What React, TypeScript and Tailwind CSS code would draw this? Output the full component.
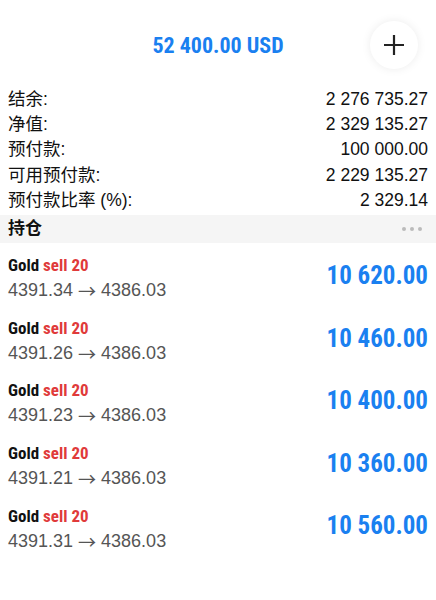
import React from "react";

const cond = { fontFamily: '"Liberation Sans Narrow", "Roboto Condensed", sans-serif' };

const summary = [
  ["结余:", "2 276 735.27"],
  ["净值:", "2 329 135.27"],
  ["预付款:", "100 000.00"],
  ["可用预付款:", "2 229 135.27"],
  ["预付款比率 (%):", "2 329.14"],
];

const positions = [
  ["4391.34", "10 620.00"],
  ["4391.26", "10 460.00"],
  ["4391.23", "10 400.00"],
  ["4391.21", "10 360.00"],
  ["4391.31", "10 560.00"],
];

export default function App() {
  return (
    <div
      className="w-[436px] h-[600px] bg-white overflow-hidden"
      style={{ fontFamily: '"Liberation Sans", "Noto Sans CJK SC", sans-serif' }}
    >
      <div className="relative h-[86px] flex items-center justify-center">
        <span className="text-[22px] font-bold text-[#1a80f0] mt-[4px]" style={cond}>
          52 400.00 USD
        </span>
        <div className="absolute right-[18px] top-[21px] w-[48px] h-[48px] rounded-full bg-white shadow-[0_0_10px_rgba(0,0,0,0.08)] flex items-center justify-center">
          <svg width="22" height="22" viewBox="0 0 22 22">
            <path d="M11 1v20M1 11h20" stroke="#222" strokeWidth="2.2" />
          </svg>
        </div>
      </div>
      <div className="px-2 flex flex-col">
        {summary.map(([l, v]) => (
          <div key={l} className="flex justify-between items-center h-[25.4px] text-[17.5px] text-[#111]">
            <span>{l}</span>
            <span>{v}</span>
          </div>
        ))}
      </div>
      <div className="mt-[2px] h-[28px] bg-[#f5f5f5] flex items-center justify-between px-2">
        <span className="text-[17px] font-bold text-[#111]">持仓</span>
        <div className="flex gap-[4px] mr-[6px]">
          <span className="w-[4px] h-[4px] rounded-full bg-[#bbb]" />
          <span className="w-[4px] h-[4px] rounded-full bg-[#bbb]" />
          <span className="w-[4px] h-[4px] rounded-full bg-[#bbb]" />
        </div>
      </div>
      <div className="flex flex-col pt-[4px]">
        {positions.map(([p, v], i) => (
          <div key={i} className="h-[62.6px] flex items-center justify-between px-2">
            <div className="flex flex-col">
              <div className="text-[17px] font-bold leading-[24px]" style={cond}>
                <span className="text-[#111]">Gold</span>{" "}
                <span className="text-[#e03a3a]">sell 20</span>
              </div>
              <div className="text-[18px] text-[#555] leading-[26px] flex items-center gap-[5px]">
                <span>{p}</span>
                <span style={{ fontFamily: '"Noto Sans CJK SC", sans-serif' }} className="text-[18px] leading-[26px]">→</span>
                <span>4386.03</span>
              </div>
            </div>
            <span className="text-[25px] font-bold text-[#1a80f0] mt-[-5px]" style={cond}>
              {v}
            </span>
          </div>
        ))}
      </div>
    </div>
  );
}
